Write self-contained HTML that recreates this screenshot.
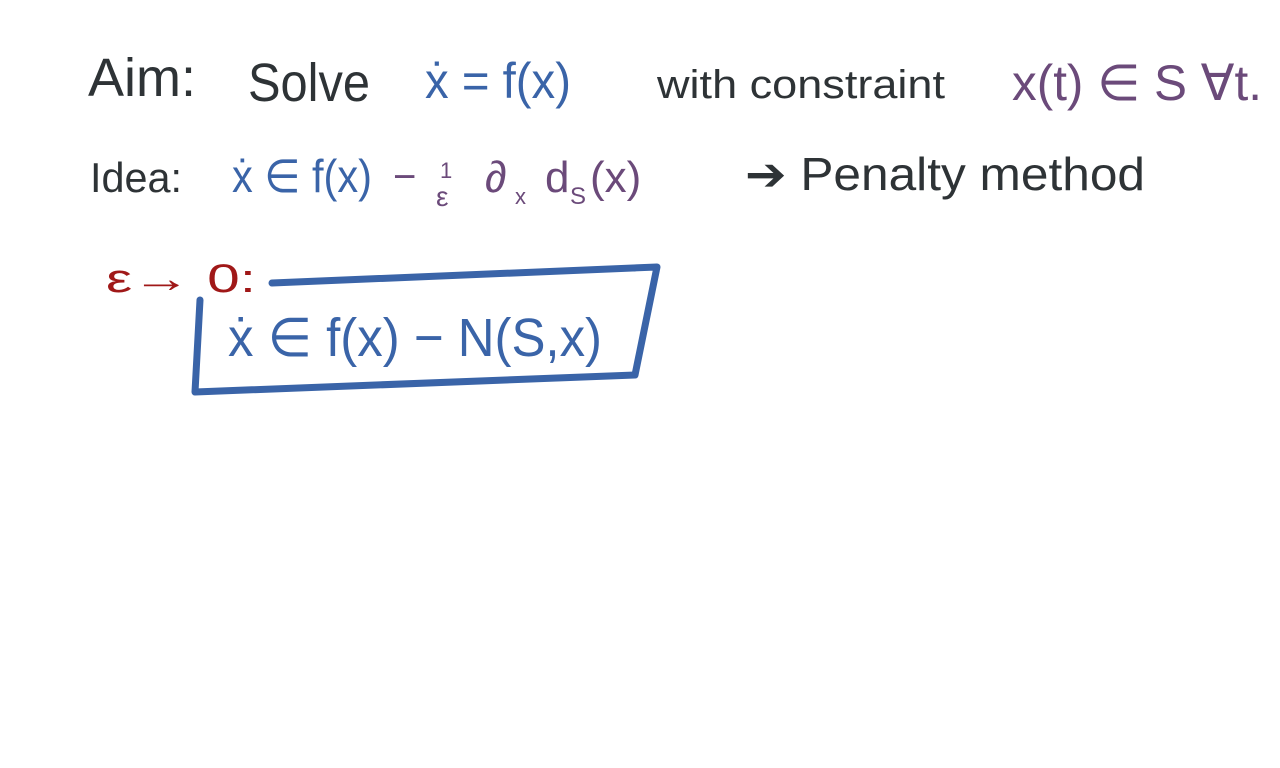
<!DOCTYPE html>
<html><head><meta charset="utf-8"><style>
html,body{margin:0;padding:0;background:#fff;width:1280px;height:768px;overflow:hidden}
svg{display:block}
text{font-family:"Liberation Sans","DejaVu Sans",sans-serif}
</style></head><body>
<svg width="1280" height="768" viewBox="0 0 1280 768">
<g fill="#2e3336" font-size="54">
<text x="88" y="96" textLength="108" lengthAdjust="spacingAndGlyphs">Aim:</text>
<text x="248" y="101" textLength="122" lengthAdjust="spacingAndGlyphs">Solve</text>
<text x="657" y="98" font-size="40" textLength="288" lengthAdjust="spacingAndGlyphs">with constraint</text>
<text x="90" y="192" font-size="42" textLength="92" lengthAdjust="spacingAndGlyphs">Idea:</text>
<text x="745" y="190" font-size="46" textLength="400" lengthAdjust="spacingAndGlyphs">➔ Penalty method</text>
</g>
<g fill="#3a64a8">
<text x="425" y="98" font-size="50" textLength="146" lengthAdjust="spacingAndGlyphs">ẋ = f(x)</text>
<text x="232" y="192" font-size="46" textLength="140" lengthAdjust="spacingAndGlyphs">ẋ ∈ f(x)</text>
<text x="228" y="356" font-size="54" textLength="374" lengthAdjust="spacingAndGlyphs">ẋ ∈ f(x) − N(S,x)</text>
</g>
<g fill="#6b4a7a">
<text x="1012" y="100" font-size="50" textLength="250" lengthAdjust="spacingAndGlyphs">x(t) ∈ S ∀t.</text>
<text x="393" y="190" font-size="40">−</text>
<text x="440" y="178" font-size="22">1</text>
<text x="436" y="206" font-size="28">ε</text>
<text x="485" y="192" font-size="44">∂</text>
<text x="515" y="204" font-size="22">x</text>
<text x="545" y="192" font-size="44">d</text>
<text x="570" y="204" font-size="24">S</text>
<text x="590" y="192" font-size="44">(x)</text>
</g>
<text x="106" y="292" fill="#a01818" font-size="40" textLength="150" lengthAdjust="spacingAndGlyphs">ε→ 0:</text>
<path d="M272 283 L657 267 L635 375 L195 392 L200 300" fill="none" stroke="#3a64a8" stroke-width="7" stroke-linejoin="round" stroke-linecap="round"/>
</svg>
</body></html>
